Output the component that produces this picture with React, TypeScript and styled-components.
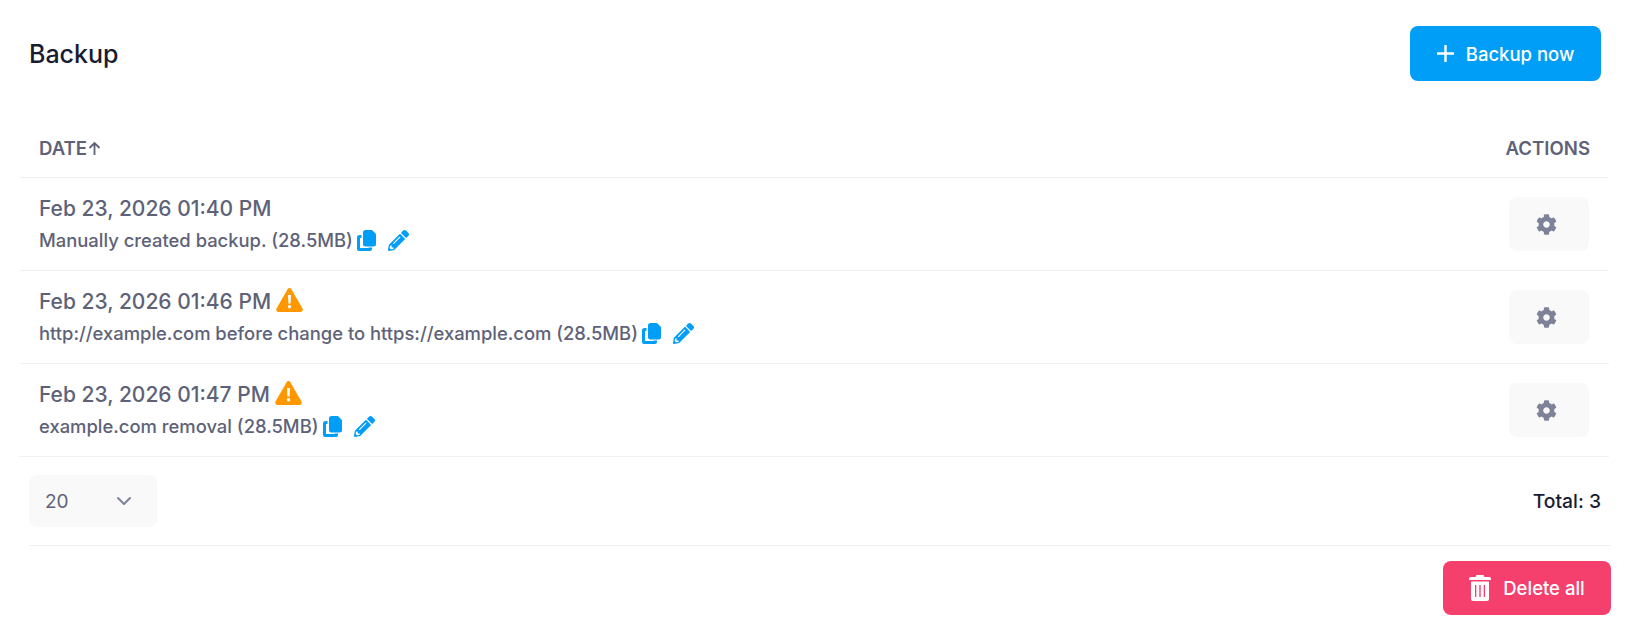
import React from "react";
import styled, { createGlobalStyle } from "styled-components";
import { FaCog, FaPencilAlt } from "react-icons/fa";
import { FiChevronDown } from "react-icons/fi";

const Global = createGlobalStyle`
  html, body { margin: 0; padding: 0; background: #fff; }
  body { font-family: Inter, "Liberation Sans", sans-serif; }
  * { box-sizing: border-box; }
`;

const Page = styled.div`
  width: 1640px;
  height: 640px;
  padding: 26px 29px 0 29px;
`;
const Header = styled.header`
  display: flex;
  align-items: center;
  justify-content: space-between;
  height: 55px;
  padding-right: 10px;
`;
const Title = styled.h1`
  margin: 1px 0 0;
  font-size: 25px;
  line-height: 1;
  font-weight: 500;
  color: #181c32;
`;
const Button = styled.button<{ $bg: string; $w: number; $h: number }>`
  display: flex;
  align-items: center;
  justify-content: center;
  gap: 12px;
  width: ${(p) => p.$w}px;
  height: ${(p) => p.$h}px;
  border: 0;
  padding: 0;
  border-radius: 8px;
  background: ${(p) => p.$bg};
  color: #fff;
  font: 500 18.5px Inter, sans-serif;
`;
const Table = styled.div`
  margin: 30px 0 0 -10px;
  width: 1590px;
`;
const HeadRow = styled.div`
  display: flex;
  align-items: center;
  justify-content: space-between;
  height: 67px;
  padding: 8px 19px 0 20px;
  border-bottom: 1px solid #f1f1f4;
  font-size: 18.6px;
  font-weight: 600;
  color: #5e6278;
`;
const DateHead = styled.span`
  display: flex;
  align-items: center;
`;
const Row = styled.div`
  display: flex;
  align-items: center;
  justify-content: space-between;
  height: 93px;
  padding: 0 20px;
  border-bottom: 1px solid #f1f1f4;
`;
const Info = styled.div`
  display: flex;
  flex-direction: column;
  gap: 7px;
  padding-bottom: 1px;
`;
const DateLine = styled.div`
  display: flex;
  align-items: center;
  gap: 5px;
  height: 26px;
  font-size: 21px;
  font-weight: 500;
  color: #5e6278;
`;
const Note = styled.div`
  display: flex;
  align-items: center;
  height: 24px;
  font-size: 18.4px;
  font-weight: 500;
  color: #5e6278;
`;
const CopySvg = styled.svg`
  margin-left: 4px;
  width: 19px;
  height: 21px;
  color: #009ef7;
`;
const EditIcon = styled(FaPencilAlt)`
  margin-left: 12px;
  width: 21px;
  height: 21px;
  color: #009ef7;
`;
const WarnSvg = styled.svg`
  width: 27px;
  height: 24px;
  margin-top: -3px;
`;
const GearButton = styled.button`
  display: flex;
  align-items: center;
  justify-content: center;
  width: 80px;
  height: 54px;
  border: 0;
  padding: 0 6px 0 0;
  border-radius: 8px;
  background: #f9f9f9;
  color: #7e8299;
  font-size: 21px;
`;
const Footer = styled.div`
  display: flex;
  align-items: center;
  justify-content: space-between;
  height: 89px;
  width: 1582px;
  border-bottom: 1px solid #f1f1f4;
  padding: 0 10px 0 0;
`;
const Select = styled.div`
  display: flex;
  align-items: center;
  justify-content: space-between;
  width: 128px;
  height: 52px;
  padding: 0 21px 0 16px;
  border-radius: 8px;
  background: #f9f9f9;
  font-size: 19px;
  color: #5e6278;
`;
const Total = styled.span`
  font-size: 19.3px;
  font-weight: 500;
  color: #181c32;
`;
const Bottom = styled.div`
  display: flex;
  justify-content: flex-end;
  width: 1582px;
  margin-top: 15px;
`;

const CopyIcon = () => (
  <CopySvg viewBox="0 0 19 21">
    <path
      fill="currentColor"
      d="M2.500 5H4.500v3H3v10h8.500v-.5H15V19a2 2 0 0 1-2 2H2a2 2 0 0 1-2-2V7.500A2.500 2.500 0 0 1 2.500 5Z"
    />
    <path
      fill="currentColor"
      d="M8.500 0H14.500a1.500 1.500 0 0 1 1 .4L18.500 3.400a1.500 1.500 0 0 1 .5 1.100V14a2.500 2.500 0 0 1-2.500 2.500h-8A2.500 2.500 0 0 1 6 14V2.500A2.500 2.500 0 0 1 8.500 0Z"
    />
  </CopySvg>
);

const WarnIcon = () => (
  <WarnSvg viewBox="0 0 27 24">
    <path
      fill="#ff9800"
      d="M11.600 1.200a2.200 2.200 0 0 1 3.800 0l11.100 19.400c.8 1.500-.2 3.400-1.900 3.400H2.400C.7 24-.3 22.100.5 20.600Z"
    />
    <path fill="#fff" d="M12 7h3l-.4 8.500h-2.200ZM13.500 17a1.700 1.700 0 1 1 0 3.400 1.700 1.700 0 0 1 0-3.400Z" />
  </WarnSvg>
);

const TrashIcon = () => (
  <svg width="22" height="26" viewBox="0 0 22 26" fill="#fff">
    <path d="M7.500 0h7l1 2H20a2 2 0 0 1 2 2v1H0V4a2 2 0 0 1 2-2h4.500Z" />
    <path
      fillRule="evenodd"
      d="M2 6.500h18V24a2 2 0 0 1-2 2H4a2 2 0 0 1-2-2ZM6 10v12h1.300V10Zm4.300 0v12h1.400V10Zm4.400 0v12H16V10Z"
    />
  </svg>
);

const rows = [
  { date: "Feb 23, 2026 01:40 PM", note: "Manually created backup. (28.5MB)", warn: false },
  { date: "Feb 23, 2026 01:46 PM", note: "http://example.com before change to https://example.com (28.5MB)", warn: true },
  { date: "Feb 23, 2026 01:47 PM", note: "example.com removal (28.5MB)", warn: true },
];

export default function App() {
  return (
    <Page>
      <Global />
      <Header>
        <Title>Backup</Title>
        <Button $bg="#009ef7" $w={191} $h={55}>
          <svg width="17" height="17" viewBox="0 0 17 17" fill="none" stroke="#fff" strokeWidth="2.400">
            <path d="M8.500 0v17M0 8.500h17" />
          </svg>
          Backup now
        </Button>
      </Header>
      <Table>
        <HeadRow>
          <DateHead>
            DATE
            <svg width="15" height="15" viewBox="0 0 15 15" fill="none" stroke="#5e6278" strokeWidth="1.800">
              <path d="M7.500 14V2M2.500 7l5-5 5 5" />
            </svg>
          </DateHead>
          <span>ACTIONS</span>
        </HeadRow>
        {rows.map((r) => (
          <Row key={r.date}>
            <Info>
              <DateLine>
                {r.date}
                {r.warn && <WarnIcon />}
              </DateLine>
              <Note>
                {r.note}
                <CopyIcon />
                <EditIcon />
              </Note>
            </Info>
            <GearButton>
              <FaCog />
            </GearButton>
          </Row>
        ))}
      </Table>
      <Footer>
        <Select>
          20
          <FiChevronDown size={24} color="#7e8299" />
        </Select>
        <Total>Total: 3</Total>
      </Footer>
      <Bottom>
        <Button $bg="#f5406e" $w={168} $h={54}>
          <TrashIcon />
          Delete all
        </Button>
      </Bottom>
    </Page>
  );
}
